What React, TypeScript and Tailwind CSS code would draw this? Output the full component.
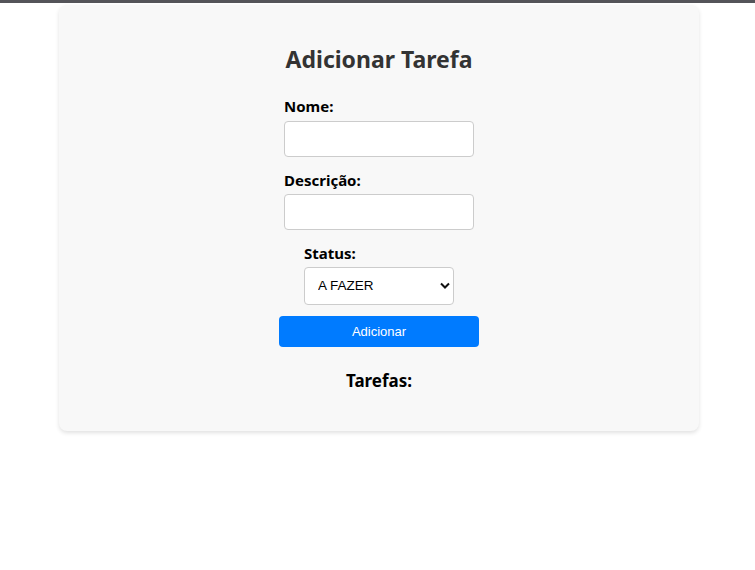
export default function App() {
  return (
    <div className="min-h-[570px] bg-white font-['Noto_Sans','Open_Sans',sans-serif]">
      <div className="h-[3px] bg-[#545459]" />
      <div className="mt-[2px] ml-[59px] w-[640px] rounded-lg bg-[#f8f8f8] pt-[38px] pb-[38px] shadow-[0_2px_4px_rgba(0,0,0,0.12)]">
        <h2 className="text-center text-[23px] leading-[32px] font-bold text-[#333]">Adicionar Tarefa</h2>

        <form className="mt-[21px] flex flex-col items-center" onSubmit={(e) => e.preventDefault()}>
          <div className="flex w-[190px] flex-col">
            <label className="text-[15px] leading-[20px] font-bold text-black">Nome:</label>
            <input
              type="text"
              className="mt-[5px] h-[36px] w-[190px] rounded border border-[#ccc] bg-white px-2"
            />
          </div>

          <div className="mt-[13px] flex w-[190px] flex-col">
            <label className="text-[15px] leading-[20px] font-bold text-black">Descrição:</label>
            <input
              type="text"
              className="mt-[4px] h-[36px] w-[190px] rounded border border-[#ccc] bg-white px-2"
            />
          </div>

          <div className="mt-[13px] flex w-[150px] flex-col">
            <label className="text-[15px] leading-[20px] font-bold text-black">Status:</label>
            <div className="relative mt-[4px]">
              <select className="h-[38px] w-[150px] appearance-none rounded border border-[#ccc] bg-white pl-[13px] font-['Liberation_Sans',Arial,sans-serif] text-[13.5px] text-black">
                <option>A FAZER</option>
                <option>FAZENDO</option>
                <option>FEITO</option>
              </select>
              <svg
                className="pointer-events-none absolute top-[15px] right-[4px]"
                width="10"
                height="7"
                viewBox="0 0 10 7"
              >
                <path d="M1 1.5 L5 5.5 L9 1.5" fill="none" stroke="#111" strokeWidth="2" />
              </svg>
            </div>
          </div>

          <button
            type="submit"
            className="mt-[11px] h-[31px] w-[200px] rounded bg-[#007bff] font-['Liberation_Sans',Arial,sans-serif] text-[13px] text-white"
          >
            Adicionar
          </button>
        </form>

        <h3 className="mt-[22px] text-center text-[17px] leading-[24px] font-bold text-black">Tarefas:</h3>
      </div>
    </div>
  );
}
